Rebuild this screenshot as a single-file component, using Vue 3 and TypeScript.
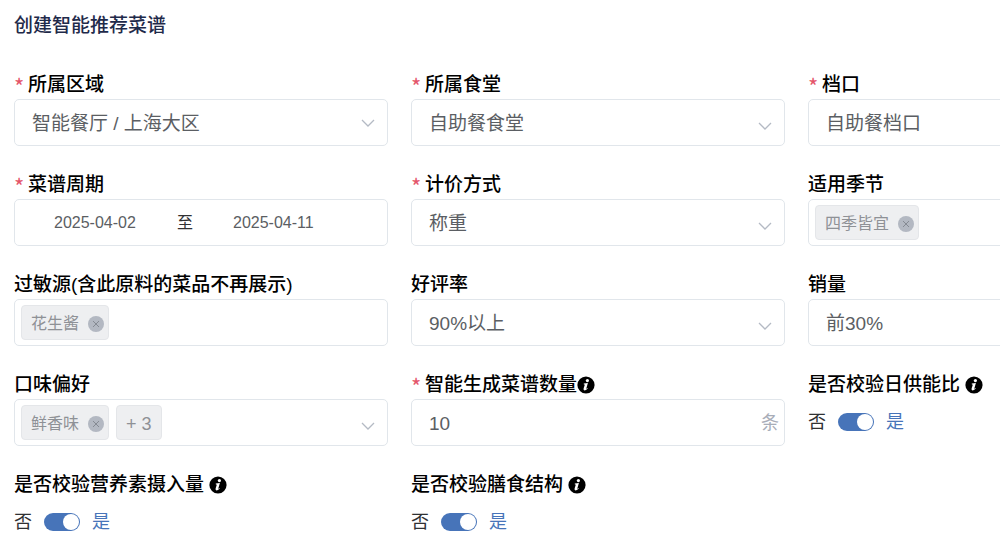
<script setup lang="ts">
import { reactive } from 'vue'

type Kind = 'select' | 'range' | 'tags' | 'number' | 'switch'

interface Field {
  id: string
  kind: Kind
  label: string
  required?: boolean
  info?: 'tight' | 'spaced'
  value?: string
  end?: string
  unit?: string
  tags?: string[]
  more?: number
  arrow?: 'center' | 'low'
  on?: boolean
}

const fields = reactive<Field[]>([
  { id: 'region', kind: 'select', label: '所属区域', required: true, value: '智能餐厅 / 上海大区', arrow: 'center' },
  { id: 'canteen', kind: 'select', label: '所属食堂', required: true, value: '自助餐食堂', arrow: 'low' },
  { id: 'stall', kind: 'select', label: '档口', required: true, value: '自助餐档口', arrow: 'low' },
  { id: 'period', kind: 'range', label: '菜谱周期', required: true, value: '2025-04-02', end: '2025-04-11' },
  { id: 'pricing', kind: 'select', label: '计价方式', required: true, value: '称重', arrow: 'low' },
  { id: 'season', kind: 'tags', label: '适用季节', tags: ['四季皆宜'], arrow: 'low' },
  { id: 'allergen', kind: 'tags', label: '过敏源(含此原料的菜品不再展示)', tags: ['花生酱'] },
  { id: 'rating', kind: 'select', label: '好评率', value: '90%以上', arrow: 'low' },
  { id: 'sales', kind: 'select', label: '销量', value: '前30%', arrow: 'low' },
  { id: 'taste', kind: 'tags', label: '口味偏好', tags: ['鲜香味'], more: 3, arrow: 'low' },
  { id: 'count', kind: 'number', label: '智能生成菜谱数量', required: true, info: 'tight', value: '10', unit: '条' },
  { id: 'energy', kind: 'switch', label: '是否校验日供能比', info: 'spaced', on: true },
  { id: 'nutrient', kind: 'switch', label: '是否校验营养素摄入量', info: 'spaced', on: true },
  { id: 'structure', kind: 'switch', label: '是否校验膳食结构', info: 'spaced', on: true },
])

function removeTag(field: Field, tag: string) {
  field.tags = field.tags?.filter((t) => t !== tag)
}
</script>

<template>
  <main class="page">
    <h1 class="title">创建智能推荐菜谱</h1>
    <form class="form" @submit.prevent>
      <div v-for="f in fields" :key="f.id" class="field">
        <div class="caption">
          <span v-if="f.required" class="star">*</span>
          <label :for="f.id">{{ f.label }}</label>
          <svg v-if="f.info" class="info" :class="f.info" viewBox="0 0 18 18" aria-hidden="true">
            <circle cx="9" cy="9" r="8.6" fill="#000" />
            <circle cx="10.4" cy="4.6" r="1.6" fill="#fff" />
            <path d="M6.8 7.5 10.9 7.1 9.3 12.4Q9.2 13.1 9.9 12.6L10.4 12.1 10.8 12.6Q9.2 14.5 7.6 14.4 6.1 14.2 6.6 12.5L7.7 8.9Q7.8 8.3 6.7 8.2Z" fill="#fff" />
          </svg>
        </div>

        <div v-if="f.kind === 'select'" class="box">
          <select :id="f.id" v-model="f.value" class="control">
            <option>{{ f.value }}</option>
          </select>
          <svg class="arrow" :class="f.arrow" viewBox="0 0 14 8" aria-hidden="true"><path d="M1 1 7 7 13 1" /></svg>
        </div>

        <div v-else-if="f.kind === 'range'" class="box range">
          <input :id="f.id" v-model="f.value" class="date" type="text" />
          <span class="to">至</span>
          <input v-model="f.end" class="date" type="text" aria-label="结束日期" />
        </div>

        <div v-else-if="f.kind === 'tags'" class="box tags">
          <span v-for="t in f.tags" :key="t" class="tag">
            {{ t }}
            <button class="close" type="button" :aria-label="'移除' + t" @click="removeTag(f, t)">
              <svg viewBox="0 0 16 16" aria-hidden="true"><path d="M5 5 11 11M11 5 5 11" /></svg>
            </button>
          </span>
          <span v-if="f.more" class="tag more">+ {{ f.more }}</span>
          <input :id="f.id" class="search" type="text" />
          <svg v-if="f.arrow" class="arrow" :class="f.arrow" viewBox="0 0 14 8" aria-hidden="true"><path d="M1 1 7 7 13 1" /></svg>
        </div>

        <div v-else-if="f.kind === 'number'" class="box">
          <input :id="f.id" v-model="f.value" class="control" type="text" inputmode="numeric" />
          <span class="unit">{{ f.unit }}</span>
        </div>

        <div v-else class="toggle">
          <span :class="{ active: !f.on }">否</span>
          <input :id="f.id" v-model="f.on" class="switch" type="checkbox" role="switch" />
          <span :class="{ active: f.on }">是</span>
        </div>
      </div>
    </form>
  </main>
</template>

<style>
body {
  margin: 0;
  background: #fff;
}
</style>

<style scoped>
.page {
  padding: 11px 14px 10px;
  overflow: hidden;
  color: #000;
  font-family: "Liberation Sans", "Noto Sans CJK SC", sans-serif;
  font-size: 19px;
  line-height: 24px;
}
.title {
  margin: 0 0 28px;
  color: #1f2a4a;
  font-size: 19px;
  font-weight: 500;
  line-height: 30px;
}
.form {
  display: grid;
  grid-template-columns: repeat(3, minmax(374px, 1fr));
  gap: 23px;
}
.caption {
  display: flex;
  align-items: center;
  box-sizing: border-box;
  height: 30px;
  padding-top: 2px;
  font-weight: 500;
  white-space: nowrap;
}
.star {
  width: 14px;
  color: #e4556a;
  font-family: "Noto Sans CJK SC", sans-serif;
  font-size: 22px;
  font-weight: 400;
}
.info {
  width: 18px;
  height: 18px;
}
.info.spaced {
  margin-left: 5px;
}
.box {
  display: flex;
  align-items: center;
  box-sizing: border-box;
  height: 47px;
  border: 1px solid #e1e6eb;
  border-radius: 5px;
  background: #fff;
}
.control,
.search,
.date {
  flex: 1;
  min-width: 0;
  margin: 0;
  padding: 0;
  border: 0;
  outline: 0;
  background: transparent;
  appearance: none;
  color: #5b5e63;
  font: inherit;
}
.control {
  box-sizing: border-box;
  height: 45px;
  padding: 2px 0 0 17px;
}
.arrow {
  flex: none;
  width: 14px;
  height: 8px;
  margin-right: 12px;
  fill: none;
  stroke: #b4bac4;
  stroke-width: 1.3;
}
.arrow.low {
  margin-top: 6px;
}
.range {
  padding-left: 39px;
  font-size: 16px;
}
.date {
  flex: none;
  width: 98px;
}
.to {
  width: 81px;
  padding-left: 25px;
  box-sizing: border-box;
  color: #303133;
}
.tags {
  gap: 7px;
  padding-left: 6px;
}
.tag {
  display: flex;
  align-items: center;
  gap: 9px;
  box-sizing: border-box;
  height: 35px;
  padding: 2px 4px 0 9px;
  border: 1px solid #e4e6e9;
  border-radius: 4px;
  background: #eeeff1;
  color: #8e9196;
  font-size: 16px;
  white-space: nowrap;
}
.tag.more {
  padding: 2px 9px 0;
  font-size: 18px;
}
.close {
  width: 16px;
  height: 16px;
  padding: 0;
  border: 0;
  border-radius: 50%;
  background: #b3b8c2;
}
.close svg {
  display: block;
  fill: none;
  stroke: #858a93;
  stroke-width: 1;
}
.unit {
  padding-right: 5px;
  color: #a8adb8;
  font-size: 18px;
}
.toggle {
  display: flex;
  align-items: center;
  gap: 12px;
  height: 46px;
  color: #303133;
  font-size: 18px;
}
.active {
  color: #4774b9;
}
.switch {
  display: flex;
  align-items: center;
  box-sizing: border-box;
  width: 36px;
  height: 18px;
  margin: 0;
  padding: 0 1px;
  border-radius: 9px;
  background: #c0c4cc;
  appearance: none;
}
.switch::before {
  width: 16px;
  height: 16px;
  border-radius: 50%;
  background: #fff;
  content: "";
}
.switch:checked {
  justify-content: flex-end;
  background: #4774b9;
}
</style>
